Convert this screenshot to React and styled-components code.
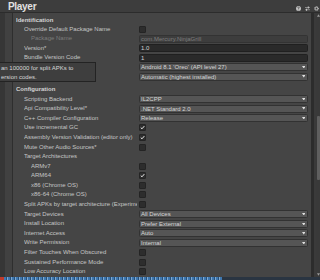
import React from "react";
import styled, { createGlobalStyle } from "styled-components";

const FONT = `"Liberation Sans", Arial, sans-serif`;

const Global = createGlobalStyle`
  html, body {
    margin: 0;
    padding: 0;
    background: #454545;
    overflow: hidden;
  }
  #root {
    width: 320px;
    height: 280px;
  }
`;

const Window = styled.div`
  position: relative;
  width: 320px;
  height: 280px;
  display: flex;
  flex-direction: column;
  font-family: ${FONT};
  color: #c8c8c8;
  background: #454545;
  overflow: hidden;
`;

const TitleBar = styled.div`
  height: 12px;
  flex: none;
  display: flex;
  align-items: center;
  justify-content: space-between;
  padding: 0 1px 0 8px;
  background: #3d3d3d;
  border-bottom: 1px solid #2c2c2c;
`;

const Title = styled.div`
  font-size: 10px;
  font-weight: bold;
  color: #e2e2e2;
  letter-spacing: -0.3px;
  line-height: 12px;
  margin-top: 1px;
`;

const TitleIcons = styled.div`
  display: flex;
  align-items: center;
  gap: 4px;
  margin-top: 4px;
`;

const Body = styled.div`
  flex: 1;
  display: flex;
  min-height: 0;
`;

const Gutter = styled.div`
  width: 13px;
  flex: none;
  background: linear-gradient(
    to right,
    #363636 0,
    #363636 5px,
    #414141 5px,
    #414141 12px,
    #2e2e2e 12px
  );
`;

const Inspector = styled.div`
  flex: 1;
  min-width: 0;
  padding-top: 2.3px;
  overflow: hidden;
`;

const Section = styled.div`
  --row: ${(p) => p.$rowH}px;
  margin-top: ${(p) => p.$gap || 0}px;
`;

const Row = styled.div`
  height: var(--row);
  display: flex;
  align-items: center;
  padding-left: ${(p) => p.$indent}px;
  padding-right: 3px;
`;

const Label = styled.div`
  flex: 1;
  min-width: 0;
  overflow: hidden;
  white-space: nowrap;
  font-size: 6px;
  line-height: 9px;
  font-weight: ${(p) => (p.$bold ? "bold" : "normal")};
  color: ${(p) => (p.$dim ? "#7c7c7c" : p.$bold ? "#d4d4d4" : "#c6c6c6")};
  margin-right: 1.5px;
`;

const Value = styled.div`
  width: 169.5px;
  flex: none;
  display: flex;
  align-items: center;
`;

const Box = styled.div`
  width: 7px;
  height: 7px;
  box-sizing: border-box;
  background: #2d2d2d;
  border: 1px solid #242424;
  border-radius: 1px;
  display: flex;
  align-items: center;
  justify-content: center;
`;

const Field = styled.div`
  flex: 1;
  height: 8px;
  box-sizing: border-box;
  border-radius: 1.5px;
  border: 1px solid ${(p) => (p.$dim ? "#333" : "#202020")};
  background: ${(p) => (p.$dim ? "#3d3d3d" : "#2a2a2a")};
  font-size: 6px;
  line-height: 6px;
  color: ${(p) => (p.$dim ? "#7e7e7e" : "#d0d0d0")};
  padding-left: 1.5px;
  white-space: nowrap;
  overflow: hidden;
`;

const Drop = styled.div`
  flex: 1;
  height: 8px;
  box-sizing: border-box;
  border-radius: 1.5px;
  border: 1px solid #323232;
  background: #555555;
  font-size: 6px;
  line-height: 6px;
  color: #d6d6d6;
  padding: 0 2px 0 1.5px;
  display: flex;
  align-items: center;
  justify-content: space-between;
  white-space: nowrap;
`;

const Tooltip = styled.div`
  position: absolute;
  left: -1px;
  top: 62px;
  width: 97px;
  height: 20px;
  box-sizing: border-box;
  background: #3e3e3e;
  border: 1px solid #232323;
  font-size: 6px;
  line-height: 8.5px;
  color: #d8d8d8;
  padding: 1px 0 0 1px;
  white-space: nowrap;
`;

const SideRule = styled.div`
  width: 5px;
  flex: none;
  background: linear-gradient(to right, #2c2c2c 0, #2c2c2c 3px, #3a3a3a 3px);
`;

const Scrollbar = styled.div`
  width: 4px;
  flex: none;
  background: #393939;
  display: flex;
  flex-direction: column;
  align-items: center;
  padding: 1px 0;
`;

const Track = styled.div`
  flex: 1;
  width: 100%;
  padding-top: 99px;
`;

const Thumb = styled.div`
  width: 3px;
  margin-left: 1px;
  height: 64px;
  background: #5f5f5f;
  border-radius: 1px;
`;

const TaskStrip = styled.div`
  height: 3px;
  flex: none;
  background:
    linear-gradient(to right, #c0392b 0, #c0392b 4px, transparent 4px, transparent 6px, rgba(0,0,0,0) 6px),
    repeating-linear-gradient(to right, #3f78b0 0, #3f78b0 2px, #24507d 2px, #24507d 3px, #7fa8d0 3px, #7fa8d0 4px);
  background-size: 100% 100%, 222px 100%;
  background-repeat: no-repeat;
  background-color: #2a3542;
`;

const Check = () => (
  <svg width="5" height="5" viewBox="0 0 10 10">
    <path d="M1.5 5.2 L4 7.6 L8.6 2.2" fill="none" stroke="#e8e8e8" strokeWidth="2" />
  </svg>
);

const Arrow = () => (
  <svg width="3.5" height="2.5" viewBox="0 0 7 5">
    <path d="M0 0 H7 L3.5 5 Z" fill="#e0e0e0" />
  </svg>
);

const HelpIcon = () => (
  <svg width="5" height="5" viewBox="0 0 10 10">
    <circle cx="5" cy="5" r="5" fill="#c2c2c2" />
    <path d="M3.4 3.8 Q3.4 2.2 5 2.2 Q6.6 2.2 6.6 3.6 Q6.6 4.6 5 5.2 V6" fill="none" stroke="#3d3d3d" strokeWidth="1.3" />
    <circle cx="5" cy="7.8" r="0.8" fill="#3d3d3d" />
  </svg>
);

const PresetIcon = () => (
  <svg width="5" height="5" viewBox="0 0 10 10">
    <path d="M0 3 H10 M0 7.5 H10" stroke="#b8b8b8" strokeWidth="1.2" />
    <rect x="5.5" y="1" width="2.2" height="4" fill="#c8c8c8" />
    <rect x="2" y="5.5" width="2.2" height="4" fill="#c8c8c8" />
  </svg>
);

const GearIcon = () => (
  <svg width="5" height="5" viewBox="0 0 10 10">
    <circle cx="5" cy="5" r="3.4" fill="none" stroke="#c8c8c8" strokeWidth="2.2" strokeDasharray="1.6 1" />
    <circle cx="5" cy="5" r="2.6" fill="none" stroke="#c8c8c8" strokeWidth="1.3" />
  </svg>
);

const UpArrow = () => (
  <svg width="3" height="3" viewBox="0 0 6 5">
    <path d="M0 5 L3 0 L6 5 Z" fill="#9a9a9a" />
  </svg>
);

const DownArrow = () => (
  <svg width="3" height="3" viewBox="0 0 6 5">
    <path d="M0 0 L3 5 L6 0 Z" fill="#9a9a9a" />
  </svg>
);

// the two api level labels sit under the tooltip, so they stay blank
const identification = [
  { id: "ident", label: "Identification", bold: true, indent: 3 },
  { id: "override", label: "Override Default Package Name", indent: 11, box: false },
  { id: "pkg", label: "Package Name", indent: 18, dim: true, field: "com.Mercury.NinjaGrill" },
  { id: "ver", label: "Version*", indent: 11, field: "1.0" },
  { id: "bundle", label: "Bundle Version Code", indent: 11, field: "1" },
  { id: "minapi", label: "", indent: 11, drop: "Android 8.1 'Oreo' (API level 27)" },
  { id: "tgtapi", label: "", indent: 11, drop: "Automatic (highest installed)" },
];

const configuration = [
  { id: "cfg", label: "Configuration", bold: true, indent: 3 },
  { id: "backend", label: "Scripting Backend", indent: 11, drop: "IL2CPP" },
  { id: "api", label: "Api Compatibility Level*", indent: 11, drop: ".NET Standard 2.0" },
  { id: "cpp", label: "C++ Compiler Configuration", indent: 11, drop: "Release" },
  { id: "gc", label: "Use incremental GC", indent: 11, box: true },
  { id: "asm", label: "Assembly Version Validation (editor only)", indent: 11, box: true },
  { id: "mute", label: "Mute Other Audio Sources*", indent: 11, box: false },
  { id: "arch", label: "Target Architectures", indent: 11 },
  { id: "armv7", label: "ARMv7", indent: 18, box: false },
  { id: "arm64", label: "ARM64", indent: 18, box: true },
  { id: "x86", label: "x86 (Chrome OS)", indent: 18, box: false },
  { id: "x8664", label: "x86-64 (Chrome OS)", indent: 18, box: false },
  { id: "split", label: "Split APKs by target architecture (Experime", indent: 11, box: false },
  { id: "devices", label: "Target Devices", indent: 11, drop: "All Devices" },
  { id: "install", label: "Install Location", indent: 11, drop: "Prefer External" },
  { id: "net", label: "Internet Access", indent: 11, drop: "Auto" },
  { id: "write", label: "Write Permission", indent: 11, drop: "Internal" },
  { id: "touch", label: "Filter Touches When Obscured", indent: 11, box: false },
  { id: "perf", label: "Sustained Performance Mode", indent: 11, box: false },
  { id: "loc", label: "Low Accuracy Location", indent: 11, box: false },
];

const PropRow = ({ r }) => (
  <Row $indent={r.indent}>
    <Label $bold={r.bold} $dim={r.dim}>
      {r.label}
    </Label>
    <Value>
      {r.box !== undefined && <Box>{r.box && <Check />}</Box>}
      {r.field && <Field $dim={r.dim}>{r.field}</Field>}
      {r.drop && (
        <Drop>
          <span>{r.drop}</span>
          <Arrow />
        </Drop>
      )}
    </Value>
  </Row>
);

export default function App() {
  return (
    <>
      <Global />
      <Window>
        <TitleBar>
          <Title>Player</Title>
          <TitleIcons>
            <HelpIcon />
            <PresetIcon />
            <GearIcon />
          </TitleIcons>
        </TitleBar>
        <Body>
          <Gutter />
          <Inspector>
            <Section $rowH={9.45}>
              {identification.map((r) => (
                <PropRow key={r.id} r={r} />
              ))}
            </Section>
            <Section $rowH={9.6} $gap={3.3}>
              {configuration.map((r) => (
                <PropRow key={r.id} r={r} />
              ))}
            </Section>
          </Inspector>
          <SideRule />
          <Scrollbar>
            <UpArrow />
            <Track>
              <Thumb />
            </Track>
            <DownArrow />
          </Scrollbar>
        </Body>
        <TaskStrip />
        <Tooltip>
          an 100000 for split APKs to
          <br />
          ersion codes.
        </Tooltip>
      </Window>
    </>
  );
}
